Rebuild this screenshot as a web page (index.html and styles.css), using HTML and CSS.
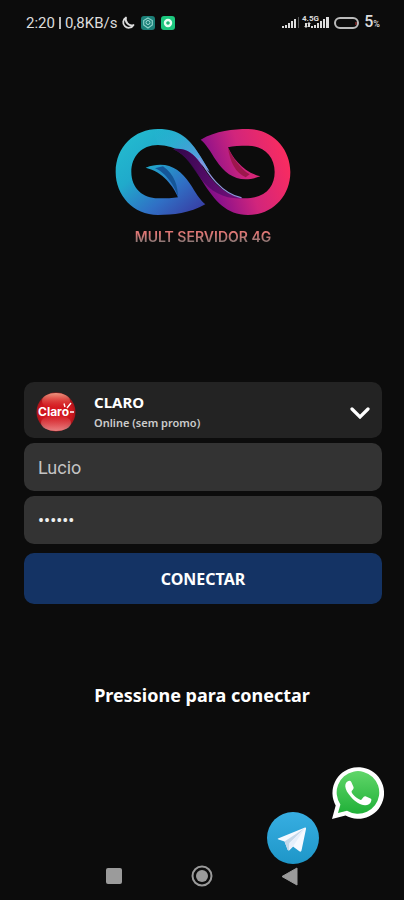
FILE: index.html
```html
<!DOCTYPE html>
<html lang="pt-BR">
<head>
<meta charset="utf-8">
<meta name="viewport" content="width=device-width, initial-scale=1">
<title>Mult Servidor 4G</title>
<link rel="stylesheet" href="styles.css">
</head>
<body>
<div class="screen">
  <header class="status">
    <div class="status-group">
      <span>2:20</span><span class="divider"></span><span>0,8KB/s</span>
      <svg class="moon" viewBox="0 0 14 14" width="14" height="14" aria-hidden="true"><path d="M5 1.500A5.500 5.500 0 1 0 12.500 9A6 6 0 0 1 5 1.500Z" fill="none" stroke="#ddd" stroke-width="1.800" stroke-linejoin="round"/></svg>
      <svg class="app-one" viewBox="0 0 14 14" width="14" height="14" aria-hidden="true"><rect width="14" height="14" rx="3" fill="#1b8078"/><path d="M7 2l4.300 2.500v4.500L7 12 2.700 9V4.500Z" fill="none" stroke="#8bd0c8" stroke-width="1.200"/><circle cx="7" cy="6.500" r="2" fill="none" stroke="#a5dcd6"/></svg>
      <svg viewBox="0 0 14 14" width="14" height="14" aria-hidden="true"><rect width="14" height="14" rx="3" fill="#1cc77e"/><circle cx="7" cy="7" r="3" fill="none" stroke="#e8fff2" stroke-width="2.400"/><circle cx="7" cy="7" r="1.300" fill="#25b676"/></svg>
    </div>
    <div class="status-group">
      <svg viewBox="0 0 48 16" width="48" height="16" aria-hidden="true">
        <g fill="#dcdcdc"><path d="M0 11h2v2H0zM3 10h2v3H3zM6 8h2v5H6zM9 6h2v7H9zM12 4h2v9h-2zM29 11h2v2h-2zM32 10h2v3h-2zM35 8h2v5h-2zM38 6h2v7h-2zM41 4h2v9h-2zM44 2h3v11h-3z"/><path d="M23 8h2v3h1l-2 2-2-2h1zM26 12h2V9h1l-2-2-2 2h1z"/></g>
        <path d="M16 2h1v11h-1z" fill="#555"/>
        <text class="network" x="20" y="6">4.5G</text>
      </svg>
      <svg class="battery" viewBox="0 0 26 13" width="26" height="13" aria-hidden="true"><rect x="1" y="1" width="23" height="10" rx="5" fill="none" stroke="#bbb" stroke-width="2"/><path d="M22 5v3" stroke="#c43c3c"/></svg>
      <span class="charge">5<small>%</small></span>
    </div>
  </header>

  <main>
    <div class="brand">
      <svg class="mark" viewBox="44 36 532 270" width="178" height="90" aria-hidden="true">
        <defs>
          <linearGradient id="blue" x1="0" y1="0" x2=".9" y2="1"><stop offset="0" stop-color="#24bfd0"/><stop offset=".4" stop-color="#20aacb"/><stop offset=".7" stop-color="#3070c5"/><stop offset="1" stop-color="#3938a0"/></linearGradient>
          <linearGradient id="pink" gradientUnits="userSpaceOnUse" x1="550" y1="90" x2="240" y2="190"><stop offset="0" stop-color="#f92c60"/><stop offset=".4" stop-color="#d1257c"/><stop offset=".72" stop-color="#8b118b"/><stop offset="1" stop-color="#560d70"/></linearGradient>
          <linearGradient id="sky" x1="0" y1="0" x2="1" y2="1"><stop offset="0" stop-color="#25b8d3" stop-opacity="0"/><stop offset="1" stop-color="#7fa6ea"/></linearGradient>
          <linearGradient id="shade" gradientUnits="userSpaceOnUse" x1="240" y1="100" x2="400" y2="260"><stop offset="0" stop-color="#26063f"/><stop offset="1" stop-color="#5d0b74"/></linearGradient>
        </defs>
        <path fill="url(#blue)" d="M317 268C270 295 220 300 175 300C100 300 48 240 48 171C48 95 105 42 175 42C240 42 270 72 303 125L330 170C285 125 225 90 175 90C125 90 95 125 95 171C95 220 130 250 175 250C200 250 220 250 235 247C222 215 190 170 138 158C200 135 240 160 270 205C290 235 300 255 317 268Z"/>
        <path fill="url(#sky)" d="M160 43C240 36 270 72 303 125L330 170C285 125 225 90 175 90Z"/>
        <path fill="url(#pink)" d="M303 74C350 47 400 42 445 42C520 42 572 102 572 171C572 247 515 300 445 300C380 300 345 257 310 202C280 153 260 120 220 102C262 98 282 118 300 142C330 192 370 242 430 250C495 252 525 217 525 171C525 122 490 92 445 92C420 92 400 92 385 97C398 127 430 172 482 184C420 207 380 182 350 137C330 107 320 87 303 74Z"/>
        <path fill="url(#shade)" opacity=".75" d="M220 102C262 98 282 118 300 142C330 192 370 242 430 250C380 254 335 235 300 187C275 153 260 120 220 102Z"/>
        <path fill="none" stroke="#8f93dd" stroke-width="4" stroke-linecap="round" d="M298 130C328 180 365 235 424 248"/>
        <path fill="#9c174c" d="M385 97C396 127 425 164 450 178L438 187C408 174 390 140 385 97Z"/>
        <path fill="#155698" d="M235 247C228 215 195 170 166 160L190 154C225 178 235 215 235 247Z"/>
      </svg>
      <h1>MULT SERVIDOR 4G</h1>
    </div>

    <form class="login" onsubmit="return false">
      <div class="server">
        <svg viewBox="0 0 40 40" width="40" height="40" aria-hidden="true">
          <defs><radialGradient id="ball" cx=".5" cy=".5" r=".52"><stop offset="0" stop-color="#d81820"/><stop offset=".8" stop-color="#cc161d"/><stop offset="1" stop-color="#98151a"/></radialGradient><linearGradient id="shine" x1="0" y1="0" x2="0" y2="1"><stop offset="0" stop-color="#ffc4a4" stop-opacity=".75"/><stop offset="1" stop-color="#e33a35" stop-opacity="0"/></linearGradient><linearGradient id="glow" x1="0" y1="0" x2="0" y2="1"><stop offset="0" stop-color="#f18a8a" stop-opacity="0"/><stop offset="1" stop-color="#f59c9c" stop-opacity=".8"/></linearGradient></defs>
          <circle cx="20" cy="20" r="19.500" fill="url(#ball)"/><ellipse cx="20" cy="9" rx="14" ry="8" fill="url(#shine)"/><ellipse cx="20" cy="31" rx="15" ry="8" fill="url(#glow)"/>
          <text class="claro" x="2" y="24">Claro</text>
          <path d="M29 15l-1-3.500M31 16l4-5M34 20h4" stroke="#fff" stroke-width="1.400"/>
        </svg>
        <div class="server-text">
          <select id="server" aria-label="Servidor"><option>CLARO</option></select>
          <label for="server">Online (sem promo)</label>
        </div>
        <svg class="chevron" viewBox="0 0 20 12" width="20" height="12" aria-hidden="true"><path d="M2 2l8 8 8-8" fill="none" stroke="#fff" stroke-width="3.200" stroke-linecap="round"/></svg>
      </div>
      <input type="text" value="Lucio" aria-label="Usuário">
      <input type="password" value="123456" aria-label="Senha">
      <button class="connect" type="submit">CONECTAR</button>
    </form>
    <p class="hint">Pressione para conectar</p>
  </main>

  <div class="contacts">
    <a class="telegram" href="#" aria-label="Telegram">
      <svg viewBox="0 0 52 52" width="52" height="52" aria-hidden="true"><defs><linearGradient id="tg" x1="0" y1="0" x2="0" y2="1"><stop offset="0" stop-color="#37aee2"/><stop offset="1" stop-color="#1e96c8"/></linearGradient></defs><circle cx="26" cy="26" r="26" fill="url(#tg)"/><path d="M11 26.500L38 15.500Q39.500 15.200 39 17L34.500 38.500Q34 40.500 32 39L26 34.500L22 38.500Q20.500 38.500 20 36L17.500 29.500L11.500 27.500Q10 27 11 26.500Z" fill="#f6f9ff"/><path d="M17.500 29.500L38 16L22.500 31L22 38.500Q20.500 38.500 20 36Z" fill="#c5d8ea"/><path d="M38 16L22.500 31L22 38.500L26 34.500Z" fill="#e6effb"/></svg>
    </a>
    <a class="whatsapp" href="#" aria-label="WhatsApp">
      <svg viewBox="0 0 52 52" width="52" height="52" aria-hidden="true"><defs><linearGradient id="wa" x1="0" y1="0" x2="0" y2="1"><stop offset="0" stop-color="#60d669"/><stop offset="1" stop-color="#20b038"/></linearGradient></defs><path d="M0 52L3.700 38.500A25.800 25.800 0 1 1 13.500 48.400Z" fill="#fff"/><path d="M6 46L8.400 37.500A21.300 21.300 0 1 1 15 43.700Z" fill="url(#wa)"/><path d="M15.500 14.500C17 13.500 18.500 13.500 19.300 15L21.500 20C21.900 21 21.500 22 19.700 24C19 25 20.500 27 23 29.500C25.500 31.500 28.500 33.500 29.300 32.700L31.800 29.700C32.500 29 33.300 29 34 29.400L38.500 31.500C39.600 32.200 39.500 32.500 39.200 34C38.500 37 35.500 38.300 33 38.200C28 37.800 23 34.800 19 30C15.500 26 13.500 22.500 13.300 19.500C13.200 17 14 15.500 15.500 14.500Z" fill="#fff"/></svg>
    </a>
  </div>

  <nav class="system" aria-label="Sistema">
    <button type="button" aria-label="Recentes"><svg viewBox="0 0 22 22" width="22" height="22"><rect x="3" y="3" width="16" height="16" rx="2" fill="#9b9b9b"/></svg></button>
    <button type="button" aria-label="Início"><svg viewBox="0 0 22 22" width="22" height="22"><circle cx="11" cy="11" r="9.500" fill="none" stroke="#9b9b9b" stroke-width="2"/><circle cx="11" cy="11" r="6" fill="#9b9b9b"/></svg></button>
    <button type="button" aria-label="Voltar"><svg viewBox="0 0 22 22" width="22" height="22"><path d="M18 3v17L3 11.500Z" fill="#9b9b9b" stroke="#9b9b9b" stroke-linejoin="round"/></svg></button>
  </nav>
</div>
</body>
</html>
```
FILE: styles.css
```css
* {
  box-sizing: border-box;
}

body {
  margin: 0;
  background: #0c0c0c;
  color: #fff;
  font-family: "Noto Sans", sans-serif;
}

button,
input,
select {
  margin: 0;
  border: 0;
  color: inherit;
  font-family: inherit;
}

svg {
  display: block;
  flex: none;
}

.screen {
  display: flex;
  flex-direction: column;
  min-height: 100vh;
}

.status {
  display: flex;
  justify-content: space-between;
  height: 46px;
  padding: 0 24px 0 26px;
  color: #ddd;
  font: 400 16px/20px Roboto, sans-serif;
}

.status-group {
  display: flex;
  align-items: center;
  gap: 4px;
}

.status-group:first-child {
  font-size: 15px;
}

.divider {
  width: 2px;
  height: 12px;
  background: #bbb;
}

.app-one {
  margin: 0 2px;
}

.network {
  fill: #ddd;
  font: 700 8px Roboto, sans-serif;
}

.charge {
  font-weight: 500;
}

.charge small {
  font-size: 9px;
}

.brand {
  display: flex;
  flex-direction: column;
  align-items: center;
  padding: 81px 0 0 2px;
}

.brand h1 {
  margin: 12px 0 0;
  background: linear-gradient(#df7775 30%, #8d7775 80%);
  background-clip: text;
  color: transparent;
  font: 600 14px/16px Inter, sans-serif;
}

.login {
  display: flex;
  flex-direction: column;
  gap: 5px;
  padding: 137px 22px 0 24px;
}

.server {
  display: flex;
  align-items: center;
  height: 56px;
  padding: 4px 12px 0;
  border-radius: 10px;
  background: #232323;
}

.server-text {
  display: flex;
  flex: 1;
  flex-direction: column;
  padding: 0 16px 0 18px;
}

.server select {
  height: 22px;
  padding: 0;
  appearance: none;
  background: transparent;
  font-size: 15px;
  font-weight: 700;
  line-height: 22px;
}

.server label {
  color: #ccc;
  font-size: 11px;
  font-weight: 600;
  line-height: 20px;
}

.chevron {
  margin-top: 2px;
}

.claro {
  fill: #fff;
  font: 700 12px Inter, sans-serif;
}

.login input {
  width: 100%;
  height: 48px;
  padding: 0 14px;
  border-radius: 10px;
  background: #333;
  color: #c4c4c4;
  font: 400 18px/24px Roboto, sans-serif;
}

.login input[type="password"] {
  color: #eee;
}

.connect {
  height: 51px;
  margin-top: 4px;
  border-radius: 10px;
  background: #143364;
  font-size: 16px;
  font-weight: 700;
}

.hint {
  margin: 77px 0 0;
  font-size: 18px;
  font-weight: 700;
  line-height: 28px;
  text-align: center;
}

.contacts {
  display: flex;
  align-items: flex-end;
  justify-content: flex-end;
  gap: 13px;
  margin-top: auto;
  padding-right: 20px;
}

.whatsapp {
  margin-bottom: 45px;
}

.system {
  display: flex;
  justify-content: center;
  gap: 66px;
  padding: 1px 0 13px;
}

.system button {
  padding: 0;
  background: transparent;
}
```
